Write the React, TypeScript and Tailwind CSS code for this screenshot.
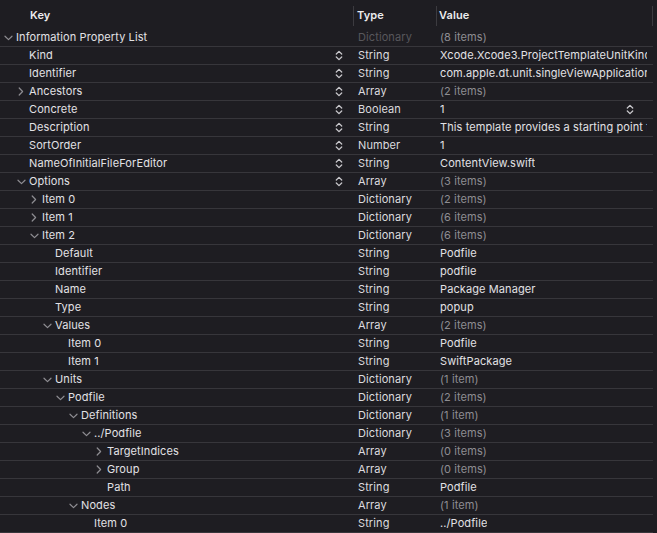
import React from 'react';

type Row = {
  depth: number;
  open?: boolean;
  key: string;
  type: string;
  value: string;
  count?: boolean;
  stepper?: boolean;
  popup?: boolean;
  root?: boolean;
};

const rows: Row[] = [
  { depth: 0, open: true, key: 'Information Property List', type: 'Dictionary', value: '(8 items)', count: true, root: true },
  { depth: 1, key: 'Kind', type: 'String', value: 'Xcode.Xcode3.ProjectTemplateUnitKind', stepper: true },
  { depth: 1, key: 'Identifier', type: 'String', value: 'com.apple.dt.unit.singleViewApplication', stepper: true },
  { depth: 1, open: false, key: 'Ancestors', type: 'Array', value: '(2 items)', count: true, stepper: true },
  { depth: 1, key: 'Concrete', type: 'Boolean', value: '1', stepper: true, popup: true },
  { depth: 1, key: 'Description', type: 'String', value: 'This template provides a starting point for an application', stepper: true },
  { depth: 1, key: 'SortOrder', type: 'Number', value: '1', stepper: true },
  { depth: 1, key: 'NameOfInitialFileForEditor', type: 'String', value: 'ContentView.swift', stepper: true },
  { depth: 1, open: true, key: 'Options', type: 'Array', value: '(3 items)', count: true, stepper: true },
  { depth: 2, open: false, key: 'Item 0', type: 'Dictionary', value: '(2 items)', count: true },
  { depth: 2, open: false, key: 'Item 1', type: 'Dictionary', value: '(6 items)', count: true },
  { depth: 2, open: true, key: 'Item 2', type: 'Dictionary', value: '(6 items)', count: true },
  { depth: 3, key: 'Default', type: 'String', value: 'Podfile' },
  { depth: 3, key: 'Identifier', type: 'String', value: 'podfile' },
  { depth: 3, key: 'Name', type: 'String', value: 'Package Manager' },
  { depth: 3, key: 'Type', type: 'String', value: 'popup' },
  { depth: 3, open: true, key: 'Values', type: 'Array', value: '(2 items)', count: true },
  { depth: 4, key: 'Item 0', type: 'String', value: 'Podfile' },
  { depth: 4, key: 'Item 1', type: 'String', value: 'SwiftPackage' },
  { depth: 3, open: true, key: 'Units', type: 'Dictionary', value: '(1 item)', count: true },
  { depth: 4, open: true, key: 'Podfile', type: 'Dictionary', value: '(2 items)', count: true },
  { depth: 5, open: true, key: 'Definitions', type: 'Dictionary', value: '(1 item)', count: true },
  { depth: 6, open: true, key: '../Podfile', type: 'Dictionary', value: '(3 items)', count: true },
  { depth: 7, open: false, key: 'TargetIndices', type: 'Array', value: '(0 items)', count: true },
  { depth: 7, open: false, key: 'Group', type: 'Array', value: '(0 items)', count: true },
  { depth: 7, key: 'Path', type: 'String', value: 'Podfile' },
  { depth: 5, open: true, key: 'Nodes', type: 'Array', value: '(1 item)', count: true },
  { depth: 6, key: 'Item 0', type: 'String', value: '../Podfile' },
];

function Disclosure({ open }: { open?: boolean }) {
  if (open === undefined) return null;
  return open ? (
    <svg width="9" height="6" viewBox="0 0 9 6" className="shrink-0">
      <path d="M1 1.2 L4.5 4.6 L8 1.2" fill="none" stroke="#8e8d92" strokeWidth="1.2" strokeLinecap="round" strokeLinejoin="round" />
    </svg>
  ) : (
    <svg width="6" height="9" viewBox="0 0 6 9" className="ml-[1px] shrink-0">
      <path d="M1.2 1 L4.6 4.5 L1.2 8" fill="none" stroke="#8e8d92" strokeWidth="1.2" strokeLinecap="round" strokeLinejoin="round" />
    </svg>
  );
}

function Stepper() {
  return (
    <svg width="8" height="11" viewBox="0 0 8 11" className="shrink-0">
      <path d="M1.3 4 L4 1.4 L6.7 4 M1.3 7 L4 9.6 L6.7 7" fill="none" stroke="#c9c8cc" strokeWidth="1.3" strokeLinecap="round" strokeLinejoin="round" />
    </svg>
  );
}

export default function App() {
  return (
    <div className="h-[533px] w-[657px] overflow-hidden bg-[#1e1d22] text-[11px] tracking-[0.1px] text-[#e2e1e5] [font-family:Inter,'Noto_Sans',sans-serif]">
      <div className="flex h-[29px] w-[653px] items-center pt-[2px] font-semibold text-[#ececee]">
        <div className="w-[353px] pl-[30px]">Key</div>
        <div className="flex h-full w-[83px] items-center">
          <div className="h-[20px] w-px bg-[#3c3b40]" />
          <span className="pl-[3px]">Type</span>
        </div>
        <div className="flex h-full flex-1 items-center">
          <div className="h-[20px] w-px bg-[#3c3b40]" />
          <span className="pl-[2px]">Value</span>
          <div className="ml-auto h-[20px] w-px bg-[#3c3b40]" />
        </div>
      </div>
      {rows.map((row, i) => (
        <div key={i} className="flex h-[18px] w-[653px] items-center border-b border-[#37363b]">
          <div className="flex w-[353px] items-center" style={{ paddingLeft: 4 + row.depth * 13 }}>
            <div className="flex w-[12px] items-center">
              <Disclosure open={row.open} />
            </div>
            <span className="whitespace-nowrap">{row.key}</span>
            {row.stepper ? (
              <div className="ml-auto mr-[10px] flex">
                <Stepper />
              </div>
            ) : null}
          </div>
          <div className={`w-[83px] pl-[5px] ${row.root ? 'text-[#58575c]' : 'text-[#dcdbdf]'}`}>{row.type}</div>
          <div className="flex min-w-0 flex-1 items-center pl-[4px] pr-[6px]">
            <span className={`overflow-hidden whitespace-nowrap ${row.count ? 'text-[#8e8d92]' : ''}`}>{row.value}</span>
            {row.popup ? (
              <div className="ml-auto mr-[13px] flex">
                <Stepper />
              </div>
            ) : null}
          </div>
        </div>
      ))}
    </div>
  );
}
